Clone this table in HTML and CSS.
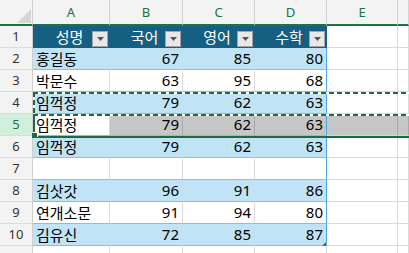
FILE: index.html
```html
<!DOCTYPE html>
<html lang="ko">
<head>
<meta charset="utf-8">
<link rel="stylesheet" href="styles.css">
</head>
<body>
<div class="sheet">
  <div class="c corner"><span class="tri"></span></div>
  <div class="c colh">A</div>
  <div class="c colh">B</div>
  <div class="c colh">C</div>
  <div class="c colh">D</div>
  <div class="c colh">E</div>
  <div class="c colh"></div>

  <div class="c rowh">1</div>
  <div class="c th">성명<span class="dd"><svg width="7" height="4" viewBox="0 0 7 4"><polygon points="0,0 7,0 3.5,4" fill="#555"/></svg></span></div>
  <div class="c th">국어<span class="dd"><svg width="7" height="4" viewBox="0 0 7 4"><polygon points="0,0 7,0 3.5,4" fill="#555"/></svg></span></div>
  <div class="c th">영어<span class="dd"><svg width="7" height="4" viewBox="0 0 7 4"><polygon points="0,0 7,0 3.5,4" fill="#555"/></svg></span></div>
  <div class="c th th-last">수학<span class="dd"><svg width="7" height="4" viewBox="0 0 7 4"><polygon points="0,0 7,0 3.5,4" fill="#555"/></svg></span></div>
  <div class="c"></div>
  <div class="c"></div>

  <div class="c rowh">2</div>
  <div class="c band">홍길동</div>
  <div class="c band n">67</div>
  <div class="c band n">85</div>
  <div class="c band n last">80</div>
  <div class="c"></div>
  <div class="c"></div>

  <div class="c rowh">3</div>
  <div class="c tw">박문수</div>
  <div class="c tw n">63</div>
  <div class="c tw n">95</div>
  <div class="c tw n last">68</div>
  <div class="c"></div>
  <div class="c"></div>

  <div class="c rowh">4</div>
  <div class="c band">임꺽정</div>
  <div class="c band n">79</div>
  <div class="c band n">62</div>
  <div class="c band n last">63</div>
  <div class="c"></div>
  <div class="c"></div>

  <div class="c rowh rowh-sel">5</div>
  <div class="c tw active">임꺽정</div>
  <div class="c tw sel n">79</div>
  <div class="c tw sel n">62</div>
  <div class="c tw sel n last">63</div>
  <div class="c sel"></div>
  <div class="c sel"></div>

  <div class="c rowh">6</div>
  <div class="c band">임꺽정</div>
  <div class="c band n">79</div>
  <div class="c band n">62</div>
  <div class="c band n last">63</div>
  <div class="c"></div>
  <div class="c"></div>

  <div class="c rowh">7</div>
  <div class="c tw"></div>
  <div class="c tw"></div>
  <div class="c tw"></div>
  <div class="c tw last"></div>
  <div class="c"></div>
  <div class="c"></div>

  <div class="c rowh">8</div>
  <div class="c band">김삿갓</div>
  <div class="c band n">96</div>
  <div class="c band n">91</div>
  <div class="c band n last">86</div>
  <div class="c"></div>
  <div class="c"></div>

  <div class="c rowh">9</div>
  <div class="c tw">연개소문</div>
  <div class="c tw n">91</div>
  <div class="c tw n">94</div>
  <div class="c tw n last">80</div>
  <div class="c"></div>
  <div class="c"></div>

  <div class="c rowh">10</div>
  <div class="c band">김유신</div>
  <div class="c band n">72</div>
  <div class="c band n">85</div>
  <div class="c band n last">87</div>
  <div class="c"></div>
  <div class="c"></div>

  <div class="c rowh"></div>
  <div class="c"></div>
  <div class="c"></div>
  <div class="c"></div>
  <div class="c"></div>
  <div class="c"></div>
  <div class="c"></div>

  <div class="selbox"></div>
  <div class="ants"></div>
  <div class="handle"></div>
  <div class="resize"></div>
</div>
</body>
</html>
```

FILE: styles.css
```css
html, body {
  margin: 0;
  padding: 0;
}
body {
  width: 409px;
  height: 253px;
  overflow: hidden;
  background: #fff;
  font-family: "Noto Sans CJK KR", "Noto Sans", sans-serif;
}
.sheet {
  position: relative;
  display: grid;
  grid-template-columns: 33px 77px 73px 72px 72px 71px 11px;
  grid-template-rows: 26px repeat(11, 22px);
}
.c {
  box-sizing: border-box;
  border-right: 1px solid #dadada;
  border-bottom: 1px solid #dadada;
  display: flex;
  align-items: flex-end;
  padding: 0 3px 1px 3px;
  font-size: 15px;
  line-height: 19px;
  color: #000;
  white-space: nowrap;
  overflow: hidden;
}
.n {
  justify-content: flex-end;
  font-family: "Noto Sans", sans-serif;
  font-size: 15px;
  padding-right: 3px;
}
.corner {
  position: relative;
  background: #f3f3f3;
  border-right-color: #d0d0d0;
  border-bottom: 2px solid #1e7145;
}
.tri {
  position: absolute;
  right: 1px;
  bottom: 1px;
  width: 0;
  height: 0;
  border-left: 14px solid transparent;
  border-bottom: 14px solid #d6d6d6;
}
.colh {
  background: #f3f3f3;
  border-right-color: #d4d4d4;
  border-bottom: 2px solid #1e7145;
  color: #1e7145;
  justify-content: center;
  align-items: center;
  font-family: "Noto Sans", sans-serif;
  font-size: 13px;
  padding: 0;
}
.rowh {
  background: #f3f3f3;
  border-right-color: #cfcfcf;
  border-bottom-color: #dcdcdc;
  justify-content: center;
  align-items: center;
  font-family: "Noto Sans", sans-serif;
  font-size: 13px;
  color: #333;
  padding: 0;
}
.rowh-sel {
  background: #d2efdd;
  color: #1e7145;
}
.th {
  position: relative;
  background: #156082;
  color: #fff;
  justify-content: center;
  border-right-color: #156082;
  border-bottom-color: #156082;
  padding-right: 6px;
}
.th-last {
  border-right-color: #156082;
}
.dd {
  position: absolute;
  right: 1px;
  bottom: 0;
  width: 16px;
  height: 16px;
  box-sizing: border-box;
  background: #e8e8e8;
  border: 1px solid #a3a3a3;
  display: flex;
  align-items: center;
  justify-content: center;
}
.dd svg {
  display: block;
}
.band {
  background: #c0e4f5;
  border-right-color: #c0e4f5;
  border-bottom-color: #7cc4e6;
}
.tw {
  border-bottom-color: #7cc4e6;
}
.last {
  border-right-color: #4aa8dc;
}
.sel {
  background: #c6c6c6;
  border-right-color: #a9a9a9;
}
.sel.last {
  border-right-color: #4aa8dc;
}
.active {
  background: #fff;
}
.selbox {
  position: absolute;
  left: 33px;
  top: 114px;
  right: 0;
  height: 24px;
  box-sizing: border-box;
  border-left: 2px solid #1e6b40;
  border-bottom: 2px solid #1e6b40;
}
.ants {
  position: absolute;
  left: 33px;
  top: 92px;
  right: -2px;
  height: 24px;
  background:
    repeating-linear-gradient(90deg, #1e6b40 0 5px, #fff 5px 8px) top left / 100% 2px no-repeat,
    repeating-linear-gradient(90deg, #1e6b40 0 5px, #fff 5px 8px) bottom left / 100% 2px no-repeat,
    repeating-linear-gradient(180deg, #1e6b40 0 5px, #fff 5px 8px) top left / 2px 100% no-repeat;
}
.handle {
  position: absolute;
  left: 32px;
  top: 133px;
  width: 5px;
  height: 5px;
  background: #1e6b40;
  box-shadow: 1px -1px 0 #fff;
}
.resize {
  position: absolute;
  left: 322px;
  top: 242px;
  width: 0;
  height: 0;
  border-left: 4px solid transparent;
  border-bottom: 4px solid #2f6f9f;
}
```
